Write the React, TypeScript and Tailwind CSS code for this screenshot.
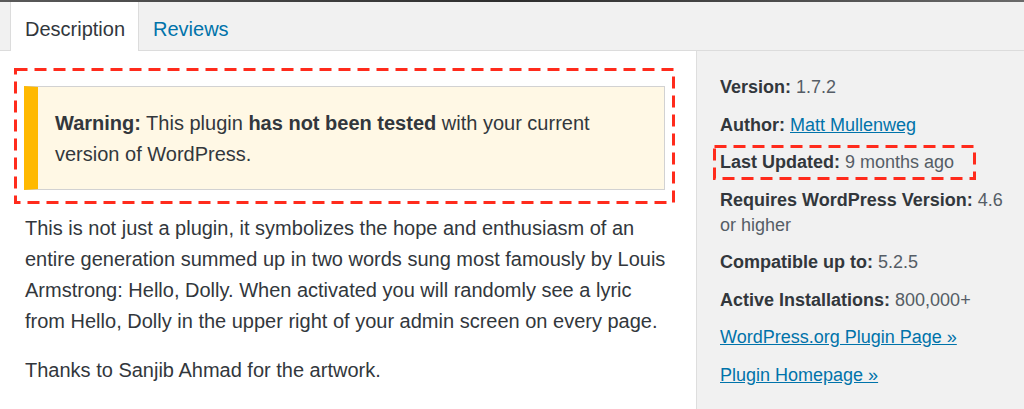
import React from "react";

const meta = [
  { label: "Version:", value: "1.7.2" },
  { label: "Author:", link: "Matt Mullenweg" },
  { label: "Last Updated:", value: "9 months ago", marked: true },
  { label: "Requires WordPress Version:", value: "4.6 or higher" },
  { label: "Compatible up to:", value: "5.2.5" },
  { label: "Active Installations:", value: "800,000+" },
];

function DashedBox({ children, className }: { children: React.ReactNode; className?: string }) {
  return (
    <div className={`relative ${className ?? ""}`}>
      <svg className="absolute inset-0 w-full h-full pointer-events-none overflow-visible" aria-hidden="true">
        <rect
          x="1.5"
          y="1.5"
          width="calc(100% - 3px)"
          height="calc(100% - 3px)"
          fill="none"
          stroke="#ff2b1c"
          strokeWidth="3"
          strokeDasharray="12 7"
        />
      </svg>
      {children}
    </div>
  );
}

export default function App() {
  return (
    <div className="w-[1024px] h-[409px] overflow-hidden bg-white font-['Liberation_Sans',Arial,sans-serif] text-[#32373c]">
      {/* strip of the page above */}
      <div className="h-[2px] bg-gradient-to-r from-[#5a5a5a] via-[#2e2e2e] to-[#6a6a6a]" />

      {/* Tabs */}
      <div className="h-[49px] bg-[#f1f1f1] border-b border-[#dcdcdc] pl-[10px] flex items-stretch">
        <div className="bg-white border-x border-[#dcdcdc] pl-[14px] pr-[13px] pt-[12px] -mb-px text-[20px] text-[#32373c]">
          Description
        </div>
        <div className="px-[14px] pt-[12px] text-[20px] text-[#0073aa]">Reviews</div>
      </div>

      <div className="flex h-[358px]">
        {/* Description */}
        <div className="w-[696px] pl-[14px] pt-[17px]">
          <DashedBox className="w-[661px] px-[10px] pt-[18px] pb-[14px]">
            <div className="bg-[#fff8e5] border border-[#d2d2d2] border-l-[14px] border-l-[#ffb900] pl-[17px] pt-[21px] pb-[19px] pr-4 text-[20px] leading-[31px] text-[#32373c]">
              <b>Warning:</b> This plugin <b>has not been tested</b> with your current version of WordPress.
            </div>
          </DashedBox>
          <p className="pl-[11px] w-[653px] mt-[9px] text-[20px] leading-[31px] text-[#32373c]">
            This is not just a plugin, it symbolizes the hope and enthusiasm of an entire generation summed up in two
            words sung most famously by Louis Armstrong: Hello, Dolly. When activated you will randomly see a lyric from
            Hello, Dolly in the upper right of your admin screen on every page.
          </p>
          <p className="pl-[11px] mt-[18px] text-[20px] leading-[31px] text-[#32373c]">
            Thanks to Sanjib Ahmad for the artwork.
          </p>
        </div>

        {/* Meta sidebar */}
        <div className="flex-1 bg-[#f1f1f1] border-l border-[#dedede] pl-[23px] pr-[10px] pt-[24px] text-[18px] leading-[25px]">
          <ul className="flex flex-col gap-[12.5px]">
            {meta.map((m) =>
              m.marked ? (
                <li key={m.label} className="-ml-[7px] -my-[5px] w-[263px]">
                  <DashedBox className="pl-[7px] py-[5px]">
                    <b className="text-[#32373c]">{m.label}</b> <span className="text-[#555d66]">{m.value}</span>
                  </DashedBox>
                </li>
              ) : (
                <li key={m.label}>
                  <b className="text-[#32373c]">{m.label}</b>{" "}
                  {m.link ? (
                    <a href="#" className="text-[#0073aa] underline">
                      {m.link}
                    </a>
                  ) : (
                    <span className="text-[#555d66]">{m.value}</span>
                  )}
                </li>
              )
            )}
            <li>
              <a href="#" className="text-[#0073aa] underline">
                WordPress.org Plugin Page »
              </a>
            </li>
            <li>
              <a href="#" className="text-[#0073aa] underline">
                Plugin Homepage »
              </a>
            </li>
          </ul>
        </div>
      </div>
    </div>
  );
}
